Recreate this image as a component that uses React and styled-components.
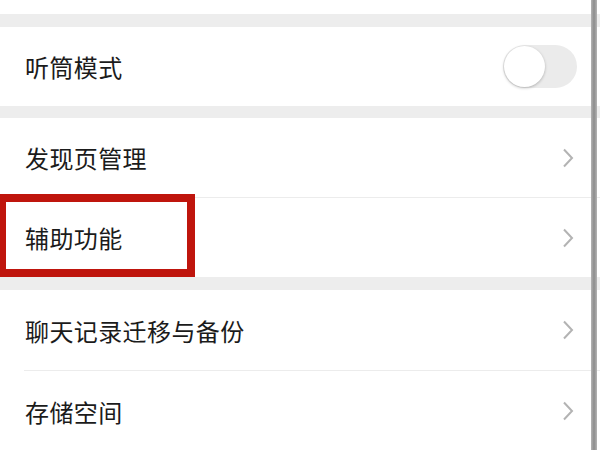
import styled, { createGlobalStyle } from "styled-components"

const Global = createGlobalStyle`
  html, body {
    margin: 0;
    padding: 0;
    background: #ededed;
  }
  * { box-sizing: border-box; }
`

const Screen = styled.div`
  position: relative;
  width: 600px;
  height: 450px;
  overflow: hidden;
  background: #ededed;
  font-family: "Noto Sans CJK SC", "Noto Sans", sans-serif;
`

const Group = styled.div`
  background: #fff;
  margin-top: ${(p) => p.gap || 0}px;
`

const TopStrip = styled.div`
  height: 14px;
`

const Row = styled.div`
  height: ${(p) => p.h || 79}px;
  display: flex;
  align-items: center;
  justify-content: space-between;
  padding: 0 23px 0 25px;
`

const Label = styled.span`
  font-size: 24px;
  color: #1b1b1b;
  letter-spacing: 0.4px;
`

const Divider = styled.div`
  height: 1px;
  margin-left: 24px;
  background: #ececec;
`

const Track = styled.div`
  position: relative;
  width: 74px;
  height: 43px;
  border-radius: 22px;
  background: #ebebeb;
`

const Knob = styled.div`
  position: absolute;
  left: 1px;
  top: 1px;
  width: 41px;
  height: 41px;
  border-radius: 50%;
  background: #fff;
  box-shadow: 0 1px 3px rgba(0, 0, 0, 0.25);
`

const Chevron = styled.svg`
  width: 12px;
  height: 20px;
  margin-right: 3px;
`

const ScrollLine = styled.div`
  position: absolute;
  top: 0;
  bottom: 0;
  left: 591px;
  width: 6px;
  background: linear-gradient(to right, #b4b4b4, #8c8c8c 50%, #b4b4b4);
`

const Highlight = styled.div`
  position: absolute;
  left: -2px;
  top: 194px;
  width: 197px;
  height: 83px;
  border: 8px solid #bf150d;
`

const Arrow = () => (
  <Chevron viewBox="0 0 12 20">
    <path d="M2 1.5 L10 10 L2 18.5" fill="none" stroke="#b3b3b3" strokeWidth="2" />
  </Chevron>
)

const App = () => {
  return (
    <Screen>
      <Global />
      <Group>
        <TopStrip />
      </Group>
      <Group gap={13}>
        <Row>
          <Label>听筒模式</Label>
          <Track>
            <Knob />
          </Track>
        </Row>
      </Group>
      <Group gap={12}>
        <Row>
          <Label>发现页管理</Label>
          <Arrow />
        </Row>
        <Divider />
        <Row>
          <Label>辅助功能</Label>
          <Arrow />
        </Row>
      </Group>
      <Group gap={13}>
        <Row h={80}>
          <Label>聊天记录迁移与备份</Label>
          <Arrow />
        </Row>
        <Divider />
        <Row h={80}>
          <Label>存储空间</Label>
          <Arrow />
        </Row>
      </Group>
      <Highlight />
      <ScrollLine />
    </Screen>
  )
}

export default App
